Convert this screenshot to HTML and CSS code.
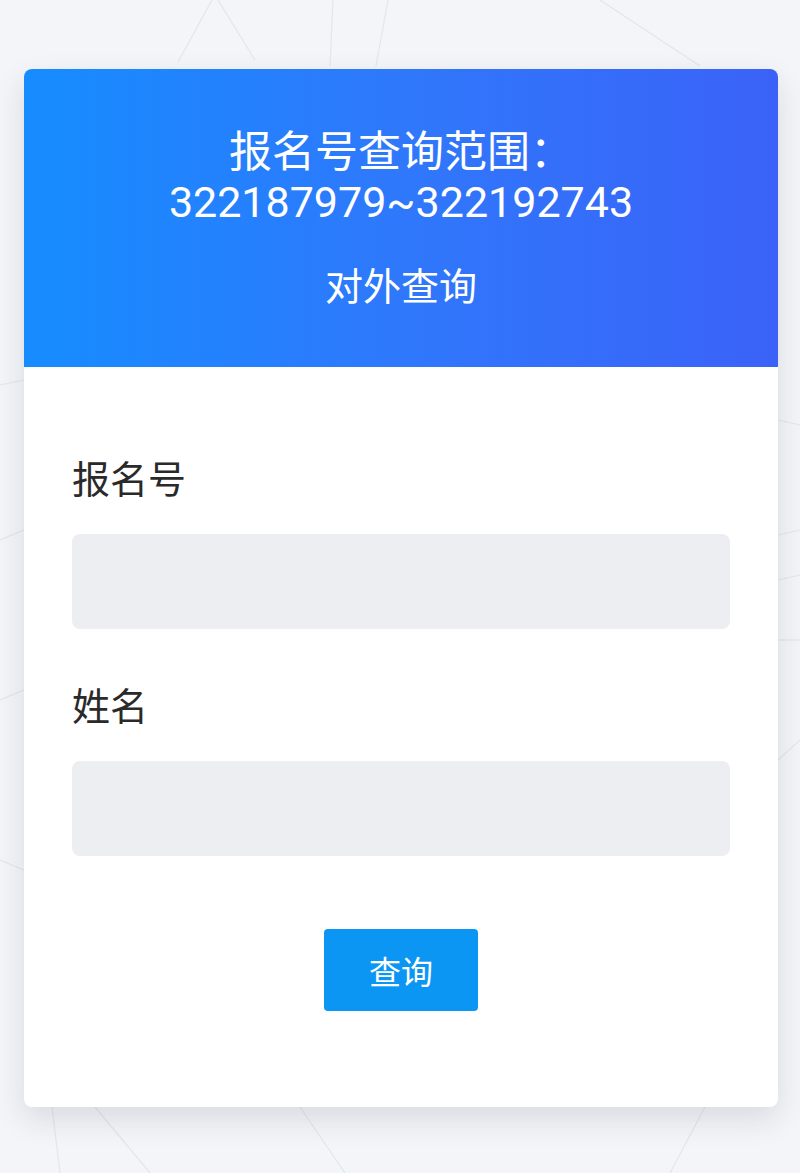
FILE: index.html
```html
<!DOCTYPE html>
<html lang="zh-CN">
<head>
<meta charset="utf-8">
<title>对外查询</title>
<link rel="stylesheet" href="styles.css">
</head>
<body>
<svg class="bg-lines" width="800" height="1173" viewBox="0 0 800 1173" aria-hidden="true">
  <g fill="none" stroke="#e3e6ec" stroke-width="1.2">
    <path d="M212 0 L178 62"/>
    <path d="M218 0 L255 60"/>
    <path d="M333 0 L330 66"/>
    <path d="M388 0 L376 66"/>
    <path d="M600 0 L700 66"/>
    <path d="M0 385 L24 380"/>
    <path d="M0 540 L24 530"/>
    <path d="M0 700 L24 690"/>
    <path d="M0 860 L24 870"/>
    <path d="M778 420 L800 425"/>
    <path d="M778 535 L800 530"/>
    <path d="M778 580 L800 575"/>
    <path d="M778 640 L800 640"/>
    <path d="M778 760 L800 740"/>
    <path d="M52 1107 L60 1173"/>
    <path d="M95 1107 L150 1173"/>
    <path d="M300 1107 L345 1173"/>
    <path d="M705 1107 L670 1173"/>
  </g>
</svg>
<main class="page">
  <section class="card">
    <header class="card-head">
      <h1 class="range">报名号查询范围：<br>322187979~322192743</h1>
      <p class="subtitle">对外查询</p>
    </header>
    <form class="card-body">
      <label class="field-label" for="regno">报名号</label>
      <input class="field-input" id="regno" type="text">
      <label class="field-label second" for="name">姓名</label>
      <input class="field-input" id="name" type="text">
      <div class="actions">
        <button class="btn" type="button">查询</button>
      </div>
    </form>
  </section>
</main>
</body>
</html>
```

FILE: styles.css
```css
* { box-sizing: border-box; }
html, body {
  margin: 0;
  padding: 0;
}
body {
  width: 800px;
  height: 1173px;
  background: #f3f5f8;
  font-family: Roboto, "Noto Sans CJK SC", sans-serif;
  position: relative;
  overflow: hidden;
}
.bg-lines {
  position: absolute;
  left: 0;
  top: 0;
  z-index: 0;
}
.page {
  position: relative;
  z-index: 1;
  padding: 69px 22px 0 24px;
}
.card {
  width: 754px;
  background: #ffffff;
  border-radius: 8px;
  overflow: hidden;
  box-shadow: 0 12px 30px rgba(40, 50, 70, 0.13);
}
.card-head {
  height: 298px;
  padding-top: 58px;
  background: linear-gradient(90deg, #168cff 0%, #2f78fb 50%, #3b62f8 100%);
  color: #ffffff;
  text-align: center;
}
.range {
  margin: 0;
  font-weight: 400;
  font-size: 43px;
  line-height: 50px;
}
.subtitle {
  margin: 37px 0 0;
  font-size: 38px;
  line-height: 46px;
}
.card-body {
  display: flex;
  flex-direction: column;
  padding: 90px 48px 96px;
  margin: 0;
}
.field-label {
  font-size: 38px;
  line-height: 46px;
  color: #2a2a2a;
}
.field-label.second {
  margin-top: 55px;
}
.field-input {
  margin-top: 31px;
  height: 95px;
  border: none;
  border-radius: 8px;
  background: #eceef1;
  font-size: 32px;
  padding: 0 20px;
  outline: none;
}
.actions {
  display: flex;
  justify-content: center;
  margin-top: 73px;
}
.btn {
  width: 154px;
  height: 82px;
  border: none;
  border-radius: 4px;
  background: #0b96f4;
  color: #ffffff;
  font-family: "Noto Sans CJK SC", sans-serif;
  font-size: 32px;
  padding: 0;
}
```
